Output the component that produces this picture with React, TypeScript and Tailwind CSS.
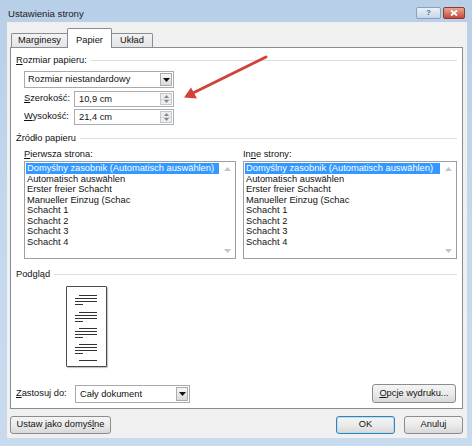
import React from "react";

const U = ({ c }: { c: string }) => <span className="underline decoration-1 underline-offset-[1px]">{c}</span>;

function Header({ children }: { children: React.ReactNode }) {
  return (
    <div className="flex items-center h-[12px] leading-[12px]">
      <span className="whitespace-nowrap">{children}</span>
      <div className="flex-1 h-px bg-[#dfdfdf] ml-[4px]" />
    </div>
  );
}

function DropBtn() {
  return (
    <div className="w-[12px] h-full border border-[#acacac] bg-gradient-to-b from-[#f6f6f6] to-[#dadada] flex items-center justify-center">
      <svg width="7" height="4" viewBox="0 0 7 4">
        <path d="M0 0h7L3.5 4z" fill="#111" />
      </svg>
    </div>
  );
}

function Spin() {
  return (
    <div className="w-[12px] h-full flex flex-col border border-[#c8c8c8] bg-[#ededed]">
      <div className="flex-1 flex items-center justify-center border-b border-[#d6d6d6]">
        <svg width="5" height="3" viewBox="0 0 5 3">
          <path d="M0 3L2.5 0L5 3z" fill="#7889a0" />
        </svg>
      </div>
      <div className="flex-1 flex items-center justify-center">
        <svg width="5" height="3" viewBox="0 0 5 3">
          <path d="M0 0L5 0L2.5 3z" fill="#7889a0" />
        </svg>
      </div>
    </div>
  );
}

const items = [
  "Domyślny zasobnik (Automatisch auswählen)",
  "Automatisch auswählen",
  "Erster freier Schacht",
  "Manueller Einzug (Schac",
  "Schacht 1",
  "Schacht 2",
  "Schacht 3",
  "Schacht 4",
];

function ListBox({ className }: { className: string }) {
  return (
    <div className={"flex h-[98px] border border-[#9a9ea6] bg-white " + className}>
      <div className="flex-1 pt-[1px] pl-[1px] overflow-hidden">
        {items.map((t, i) => (
          <div
            key={i}
            className={
              "h-[10.5px] leading-[10.5px] pl-[1px] whitespace-nowrap " +
              (i === 0 ? "bg-[#3399ff] text-white" : "text-[#111]")
            }
          >
            {t}
          </div>
        ))}
      </div>
      <div className="w-[16px] flex flex-col items-center justify-between pt-[5px] pb-[5px]">
        <svg width="7" height="4" viewBox="0 0 7 4">
          <path d="M0 4L3.5 0L7 4z" fill="#c4c4c4" />
        </svg>
        <svg width="7" height="4" viewBox="0 0 7 4">
          <path d="M0 0L7 0L3.5 4z" fill="#c4c4c4" />
        </svg>
      </div>
    </div>
  );
}

function Btn({ children, className, def }: { children: React.ReactNode; className: string; def?: boolean }) {
  return (
    <div
      className={
        "flex items-center justify-center rounded-[3px] border bg-gradient-to-b from-[#f4f4f4] via-[#ebebeb] to-[#d8d8d8] " +
        (def ? "border-[#3c7fb1] shadow-[inset_0_0_0_1px_#b4e0f7] " : "border-[#8c8c8c] ") +
        className
      }
    >
      {children}
    </div>
  );
}

const groups = [8, 25, 41, 57];

export default function App() {
  return (
    <div className="relative w-[472px] h-[446px] overflow-hidden bg-gradient-to-b from-[#b8cfe8] via-[#c4d8ed] to-[#c8daee] font-['Liberation_Sans',Arial,sans-serif] text-[9.3px] text-[#111] flex flex-col">
      {/* title bar */}
      <div className="h-[22px] flex items-start shrink-0">
        <div className="ml-[8px] mt-[8px] leading-[12px] text-[9.6px] text-[#1b1b1b]">Ustawienia strony</div>
        <div className="ml-auto mt-[7px] mr-[7px] flex gap-[2px]">
          <div className="w-[25px] h-[12px] rounded-[2px] border border-[#8aa0bb] bg-gradient-to-b from-[#e9f0f8] to-[#c6d6ea] flex items-center justify-center text-[8px] leading-none text-[#5a6b80] font-bold">
            ?
          </div>
          <div className="w-[22px] h-[12px] rounded-[2px] border border-[#8e3b2f] bg-gradient-to-b from-[#e7a695] to-[#c4473a] flex items-center justify-center">
            <svg width="8" height="6" viewBox="0 0 8 6">
              <path d="M1 0.5L7 5.5M7 0.5L1 5.5" stroke="#fff" strokeWidth="1.8" />
            </svg>
          </div>
        </div>
      </div>

      {/* client area */}
      <div className="ml-[7px] mr-[5px] h-[416px] bg-[#f0f0f0] pl-[3px] pr-[4px] flex flex-col shrink-0">
        {/* tabs */}
        <div className="h-[26px] flex items-end pl-[1px] -mb-px relative z-10">
          <div className="w-[56px] h-[14px] mb-px flex items-center justify-center border-t border-l border-[#898c95] bg-gradient-to-b from-[#f3f3f3] to-[#e4e4e4] rounded-tl-[2px]">
            Marginesy
          </div>
          <div className="w-[45px] h-[20px] pt-[5px] leading-[12px] text-center border-t border-l border-r border-[#898c95] bg-white rounded-t-[2px]">
            Papier
          </div>
          <div className="w-[41px] h-[14px] mb-px flex items-center justify-center border-t border-r border-[#898c95] bg-gradient-to-b from-[#f3f3f3] to-[#e4e4e4] rounded-tr-[2px]">
            Układ
          </div>
        </div>

        {/* panel */}
        <div className="h-[362px] border border-[#898c95] bg-white flex flex-col pl-[5px] pr-[5px] pt-[6px] pb-[5px]">
          <Header>
            <U c="R" />ozmiar papieru:
          </Header>
          <div className="pl-[8px] flex flex-col">
            <div className="mt-[5px] flex w-[150px] h-[17px] border border-[#a9a9a9] bg-white p-px">
              <div className="flex-1 pl-[2px] leading-[13px]">Rozmiar niestandardowy</div>
              <DropBtn />
            </div>
            <div className="mt-[3px] flex items-center h-[16px]">
              <span className="w-[50px]">
                <U c="S" />zerokość:
              </span>
              <div className="w-[100px] h-full border border-[#abadb3] bg-white flex p-px">
                <span className="flex-1 pl-[3px] leading-[12px]">10,9 cm</span>
                <Spin />
              </div>
            </div>
            <div className="mt-[2px] flex items-center h-[16px]">
              <span className="w-[50px]">
                <U c="W" />ysokość:
              </span>
              <div className="w-[100px] h-full border border-[#abadb3] bg-white flex p-px">
                <span className="flex-1 pl-[3px] leading-[12px]">21,4 cm</span>
                <Spin />
              </div>
            </div>
          </div>

          <div className="mt-[7px]">
            <Header>Źródło papieru</Header>
          </div>
          <div className="pl-[8px] mt-[4px] flex gap-[7px]">
            <div className="flex flex-col">
              <div className="h-[12px] leading-[12px]">
                <U c="P" />ierwsza strona:
              </div>
              <ListBox className="mt-[1px] w-[212px]" />
            </div>
            <div className="flex flex-col">
              <div className="h-[12px] leading-[12px]">
                In<U c="n" />e strony:
              </div>
              <ListBox className="mt-[1px] w-[214px]" />
            </div>
          </div>

          <div className="mt-[9px]">
            <Header>Podgląd</Header>
          </div>
          <div className="mt-[6px] ml-[50px] w-[41px] h-[81px] border border-[#4a4a4a] bg-white rounded-[1px] shadow-[1px_1px_1px_rgba(0,0,0,0.25)]">
            <svg width="39" height="79" viewBox="0 0 39 79">
              {groups.map((g) => (
                <g key={g} fill="#333">
                  <rect x="12" y={g} width="18" height="1" />
                  <rect x="8" y={g + 3} width="22" height="1" />
                  <rect x="8" y={g + 6} width="22" height="1" />
                  <rect x="8" y={g + 9} width="8" height="1" />
                </g>
              ))}
              <rect x="12" y="73" width="18" height="1" fill="#333" />
            </svg>
          </div>

          <div className="mt-auto flex items-center">
            <span className="w-[59px] ml-0">
              <U c="Z" />astosuj do:
            </span>
            <div className="flex w-[115px] h-[18px] border border-[#a9a9a9] bg-white p-px">
              <div className="flex-1 pl-[3px] leading-[14px]">Cały dokument</div>
              <DropBtn />
            </div>
            <Btn className="ml-auto mr-px w-[84px] h-[19px]">
              <span>
                <U c="O" />pcje wydruku...
              </span>
            </Btn>
          </div>
        </div>

        {/* bottom buttons */}
        <div className="mt-[7px] flex h-[18px]">
          <Btn className="w-[101px] h-full">
            <span>
              Ustaw jako domyś<U c="l" />ne
            </span>
          </Btn>
          <Btn def className="ml-auto w-[59px] h-full">
            OK
          </Btn>
          <Btn className="ml-[9px] w-[59px] h-full">Anuluj</Btn>
        </div>
      </div>

      {/* red annotation arrow */}
      <svg className="absolute left-0 top-0 pointer-events-none" width="472" height="446" viewBox="0 0 472 446">
        <line x1="266" y1="57" x2="194" y2="92.5" stroke="#d3423a" strokeWidth="3" strokeLinecap="round" />
        <path d="M184 97.5L191 87.5L197 98.5z" fill="#d3423a" />
      </svg>
    </div>
  );
}
